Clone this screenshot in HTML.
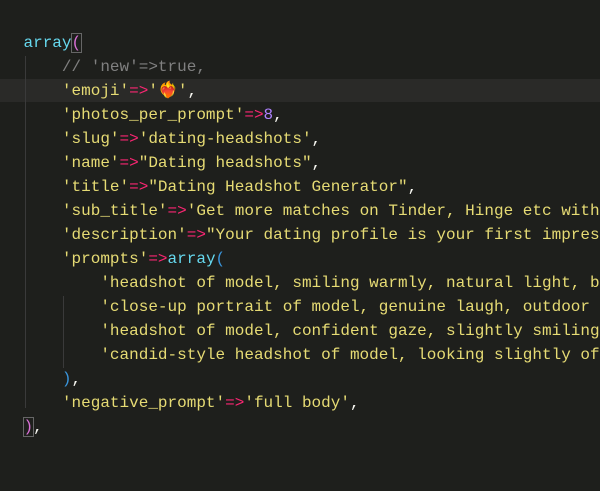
<html><head><style>
body{margin:0;width:600px;height:491px;background:#1e1f1c;overflow:hidden;position:relative}
#h{position:absolute;left:0;top:79px;width:600px;height:23px;background:#2a2a28}
pre{position:absolute;left:23.5px;top:31px;margin:0;font:16px/24px "Liberation Mono","DejaVu Sans Mono",monospace;color:#f8f8f2;white-space:pre}
.s{color:#e6db74}.o{color:#f92672}.f{color:#66d9ef}.c{color:#808080}.n{color:#ae81ff}.b{color:#3a96dd}
.pb{color:#da70d6;outline:1px solid #666;}
.g{position:absolute;width:1px;background:#3a3a3a}
</style></head><body>
<div id="h"></div>
<div class="g" style="left:25px;top:56px;height:352px"></div>
<div class="g" style="left:63px;top:296px;height:72px"></div>
<pre><span class="f">array</span><span class="pb">(</span>
    <span class="c">// 'new'=&gt;true,</span>
    <span class="s">'emoji'</span><span class="o">=&gt;</span><span class="s">'</span>❤️‍🔥<span class="s">'</span>,
    <span class="s">'photos_per_prompt'</span><span class="o">=&gt;</span><span class="n">8</span>,
    <span class="s">'slug'</span><span class="o">=&gt;</span><span class="s">'dating-headshots'</span>,
    <span class="s">'name'</span><span class="o">=&gt;</span><span class="s">"Dating headshots"</span>,
    <span class="s">'title'</span><span class="o">=&gt;</span><span class="s">"Dating Headshot Generator"</span>,
    <span class="s">'sub_title'</span><span class="o">=&gt;</span><span class="s">'Get more matches on Tinder, Hinge etc with</span>
    <span class="s">'description'</span><span class="o">=&gt;</span><span class="s">"Your dating profile is your first impres</span>
    <span class="s">'prompts'</span><span class="o">=&gt;</span><span class="f">array</span><span class="b">(</span>
        <span class="s">'headshot of model, smiling warmly, natural light, b</span>
        <span class="s">'close-up portrait of model, genuine laugh, outdoor </span>
        <span class="s">'headshot of model, confident gaze, slightly smiling</span>
        <span class="s">'candid-style headshot of model, looking slightly of</span>
    <span class="b">)</span>,
    <span class="s">'negative_prompt'</span><span class="o">=&gt;</span><span class="s">'full body'</span>,
<span class="pb">)</span>,
</pre>
</body></html>
